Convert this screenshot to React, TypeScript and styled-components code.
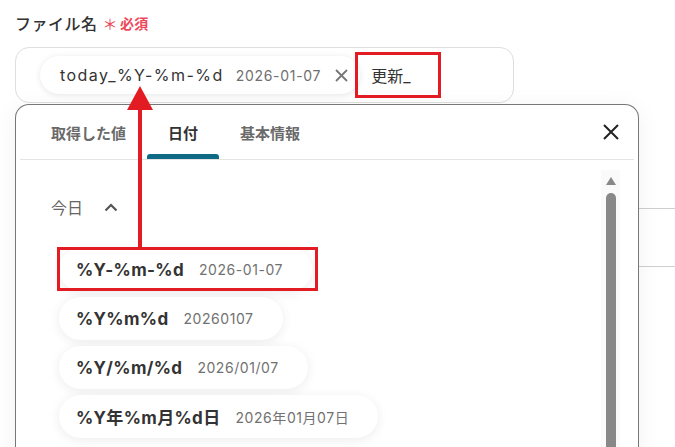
import styled, { createGlobalStyle } from 'styled-components'

const GlobalStyle = createGlobalStyle`
  body {
    margin: 0;
    background: #fff;
    font-family: "Inter", "Noto Sans CJK JP", sans-serif;
    color: #333;
  }
`

const RED = '#e31b22'

const Page = styled.div`
  position: relative;
  width: 675px;
  height: 447px;
  overflow: hidden;
  padding: 11px 0 0 15px;
  box-sizing: border-box;
`

const Label = styled.div`
  display: flex;
  align-items: center;
  height: 24px;
  font-size: 16px;
  font-weight: 500;
  color: #333;
  letter-spacing: 0.03em;
`

const Required = styled.span`
  display: flex;
  align-items: center;
  margin-left: 5px;
  color: #ec4a5c;
  font-size: 14px;
  font-weight: 700;
  gap: 2px;
`

const Star = styled.span`
  font-size: 15px;
  font-weight: 400;
  line-height: 1;
  margin-top: 2px;
`

const InputBox = styled.div`
  margin-top: 12px;
  width: 499px;
  height: 56px;
  box-sizing: border-box;
  border: 1px solid #dedede;
  border-radius: 14px;
  display: flex;
  align-items: center;
  padding-left: 24px;
`

const Chip = styled.div`
  display: flex;
  align-items: center;
  height: 38px;
  padding: 0 12px 0 20px;
  border-radius: 19px;
  background: #fff;
  box-shadow: 0 1px 6px rgba(0, 0, 0, 0.1);
`

const ChipName = styled.span`
  font-size: 16px;
  letter-spacing: 0.09em;
  color: #333;
`

const ChipDate = styled.span`
  margin-left: 12px;
  font-size: 14px;
  letter-spacing: 0.05em;
  color: #6f6f6f;
`

const ChipClose = styled.span`
  display: flex;
  margin-left: 14px;
`

const Typed = styled.span`
  margin-left: 11px;
  font-size: 16px;
  color: #333;
`

const Rows = styled.div`
  margin-top: 48px;
`

const Row = styled.div`
  height: 57px;
  border-bottom: 1px solid #cfcfcf;
`

const Panel = styled.div`
  position: absolute;
  left: 15px;
  top: 104px;
  width: 624px;
  height: 380px;
  box-sizing: border-box;
  border: 1px solid #777;
  border-bottom: none;
  border-radius: 14px 14px 0 0;
  background: #fff;
  box-shadow: 0 4px 24px rgba(0, 0, 0, 0.06);
  display: flex;
  flex-direction: column;
`

const TabBar = styled.div`
  display: flex;
  height: 54px;
  margin: 0 4px;
  padding-left: 10px;
  border-bottom: 1px solid #e4e4e4;
`

const Tab = styled.div<{ $active?: boolean }>`
  position: relative;
  display: flex;
  align-items: center;
  padding: 0 21px;
  font-size: 15px;
  font-weight: 600;
  color: ${(p) => (p.$active ? '#333' : '#6a6a6a')};

  &::after {
    content: '';
    display: ${(p) => (p.$active ? 'block' : 'none')};
    position: absolute;
    left: 0;
    right: 0;
    bottom: 0;
    height: 5px;
    border-radius: 3px 3px 0 0;
    background: #0e6a85;
  }
`

const CloseButton = styled.div`
  margin-left: auto;
  display: flex;
  align-items: center;
  padding-right: 15px;
`

const Body = styled.div`
  flex: 1;
  display: flex;
`

const Content = styled.div`
  flex: 1;
  padding: 35px 0 0 35px;
`

const GroupHeader = styled.div`
  display: flex;
  align-items: center;
  height: 24px;
  font-size: 16px;
  color: #666;
  gap: 21px;
`

const Items = styled.div`
  display: flex;
  flex-direction: column;
  align-items: flex-start;
  gap: 6px;
  margin: 29px 0 0 8px;
`

const Item = styled.div`
  display: flex;
  align-items: center;
  height: 43px;
  padding: 0 29px 0 17px;
  border-radius: 22px;
  background: #fff;
  box-shadow: 0 2px 12px rgba(0, 0, 0, 0.08);
  gap: 15px;
`

const ItemName = styled.span`
  font-size: 17px;
  font-weight: 700;
  letter-spacing: 0.02em;
  color: #333;
`

const ItemDate = styled.span`
  font-size: 14px;
  letter-spacing: 0.04em;
  color: #717171;
`

const Track = styled.div`
  width: 19px;
  margin: 10px 18px 0 0;
  background: #fafafa;
  display: flex;
  flex-direction: column;
  align-items: center;
`

const ArrowUp = styled.div`
  margin-top: 7px;
  width: 0;
  height: 0;
  border-left: 5px solid transparent;
  border-right: 5px solid transparent;
  border-bottom: 8px solid #888;
`

const Thumb = styled.div`
  margin-top: 8px;
  width: 10px;
  flex: 1;
  border-radius: 5px;
  background: #888;
`

const RedBox = styled.div<{ $x: number; $y: number; $w: number; $h: number }>`
  position: absolute;
  left: ${(p) => p.$x}px;
  top: ${(p) => p.$y}px;
  width: ${(p) => p.$w}px;
  height: ${(p) => p.$h}px;
  box-sizing: border-box;
  border: 3px solid ${RED};
  pointer-events: none;
`

const Pointer = styled.svg`
  position: absolute;
  left: 120px;
  top: 80px;
`

const formats = [
  { name: '%Y-%m-%d', value: '2026-01-07' },
  { name: '%Y%m%d', value: '20260107' },
  { name: '%Y/%m/%d', value: '2026/01/07' },
  { name: '%Y年%m月%d日', value: '2026年01月07日' },
]

const App = () => {
  return (
    <>
      <GlobalStyle />
      <Page>
        <Label>
          ファイル名
          <Required>
            <Star>＊</Star>必須
          </Required>
        </Label>
        <InputBox>
          <Chip>
            <ChipName>today_%Y-%m-%d</ChipName>
            <ChipDate>2026-01-07</ChipDate>
            <ChipClose>
              <svg width="13" height="13" viewBox="0 0 13 13">
                <path d="M1 1L12 12M12 1L1 12" stroke="#777" strokeWidth="1.8" />
              </svg>
            </ChipClose>
          </Chip>
          <Typed>更新_</Typed>
        </InputBox>
        <Rows>
          <Row />
          <Row />
        </Rows>

        <Panel>
          <TabBar>
            <Tab>取得した値</Tab>
            <Tab $active>日付</Tab>
            <Tab>基本情報</Tab>
            <CloseButton>
              <svg width="16" height="16" viewBox="0 0 16 16">
                <path d="M1 1L15 15M15 1L1 15" stroke="#222" strokeWidth="2" />
              </svg>
            </CloseButton>
          </TabBar>
          <Body>
            <Content>
              <GroupHeader>
                今日
                <svg width="14" height="9" viewBox="0 0 14 9">
                  <path d="M1.5 7.5L7 2L12.5 7.5" fill="none" stroke="#555" strokeWidth="2.2" />
                </svg>
              </GroupHeader>
              <Items>
                {formats.map((f) => (
                  <Item key={f.name}>
                    <ItemName>{f.name}</ItemName>
                    <ItemDate>{f.value}</ItemDate>
                  </Item>
                ))}
              </Items>
            </Content>
            <Track>
              <ArrowUp />
              <Thumb />
            </Track>
          </Body>
        </Panel>

        <RedBox $x={355} $y={52} $w={86} $h={46} />
        <RedBox $x={57} $y={247} $w={261} $h={44} />
        <Pointer width="40" height="170" viewBox="0 0 40 170">
          <path d="M20 6L33 30H7Z" fill={RED} />
          <rect x="18" y="28" width="4" height="140" fill={RED} />
        </Pointer>
      </Page>
    </>
  )
}

export default App
